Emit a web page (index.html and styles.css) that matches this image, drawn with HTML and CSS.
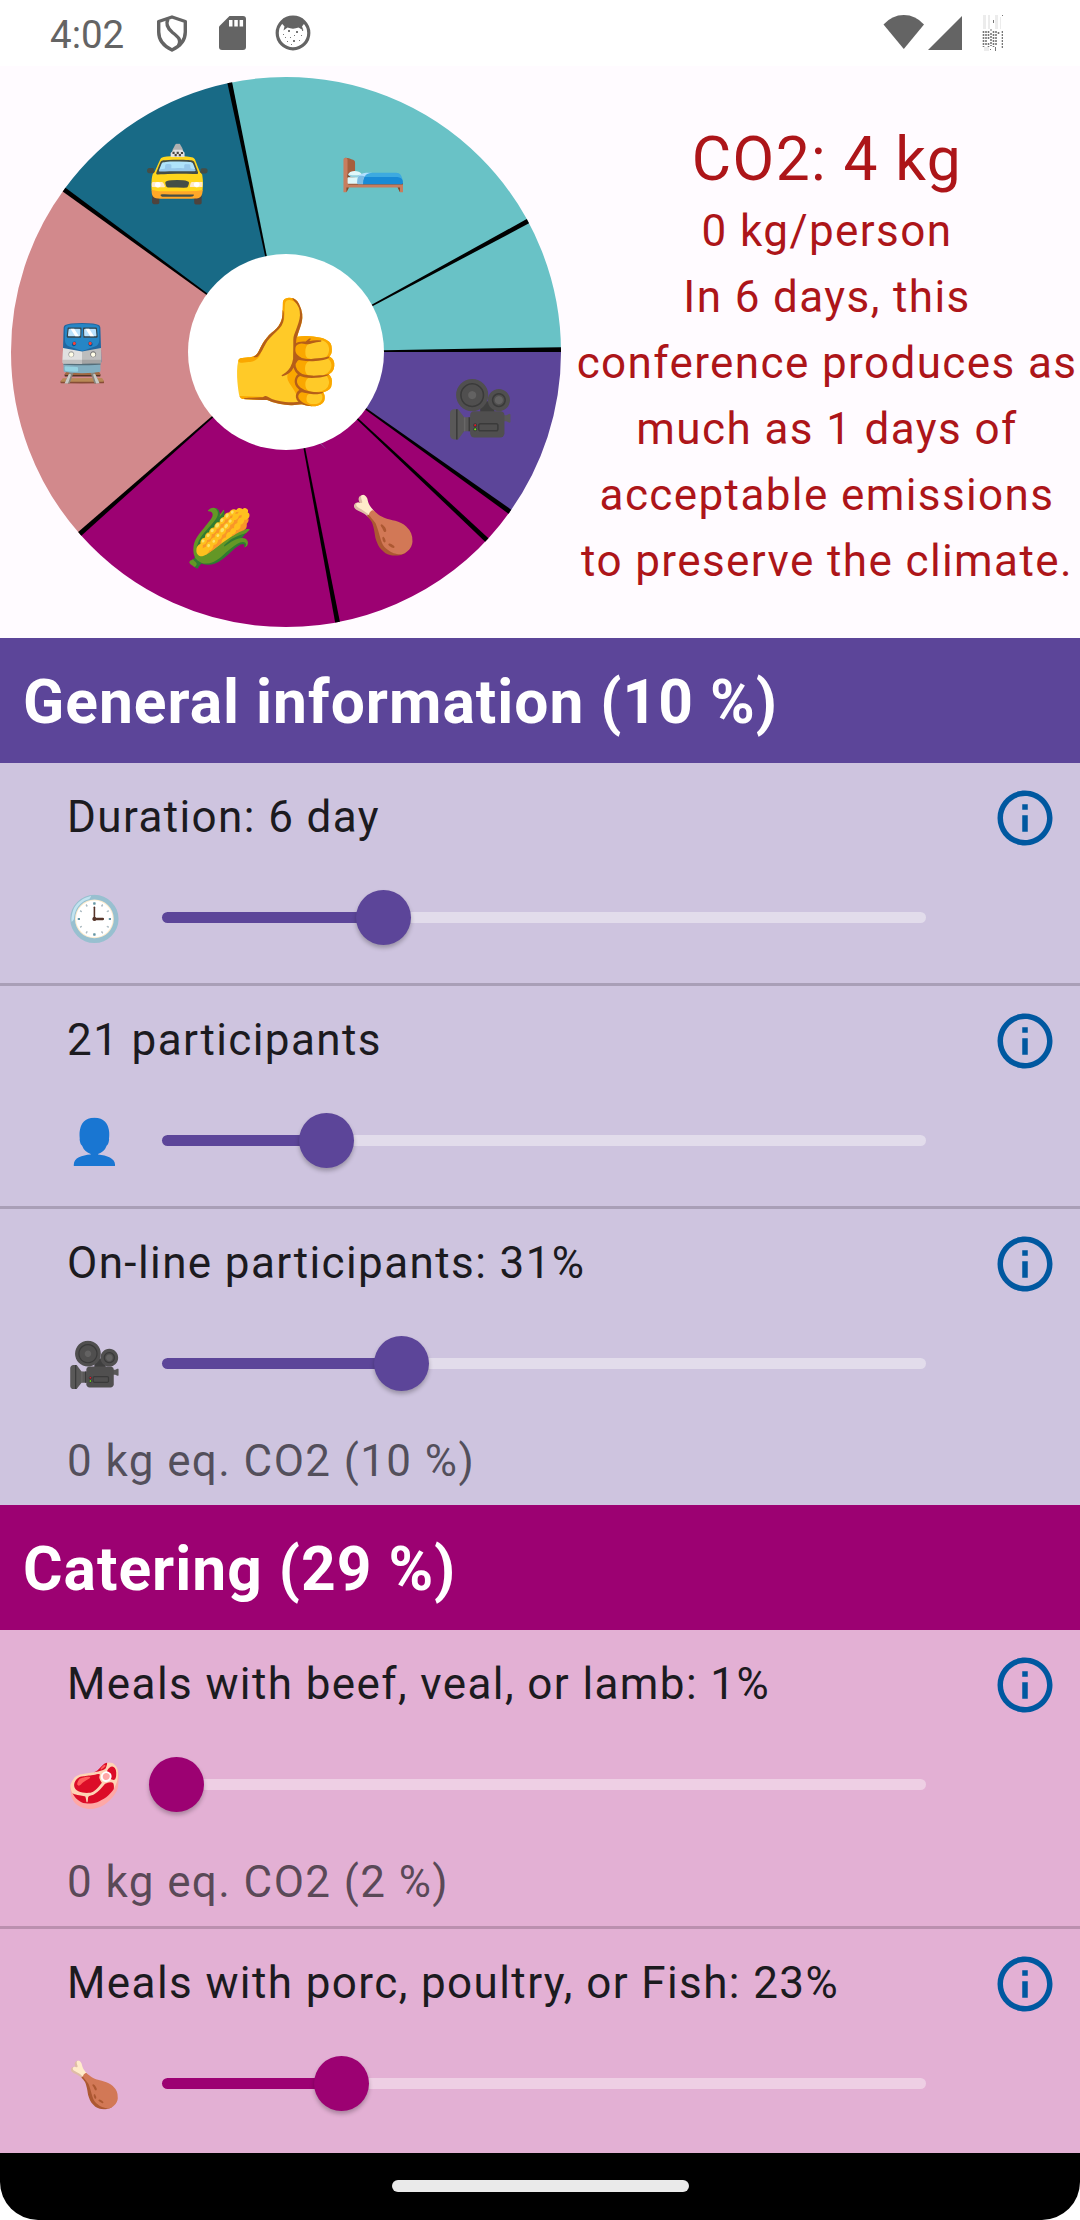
FILE: index.html
```html
<!DOCTYPE html>
<html lang="en">
<head>
<meta charset="utf-8">
<title>Conference CO2 calculator</title>
<link rel="stylesheet" href="styles.css">
</head>
<body>
<svg class="defs" aria-hidden="true">
  <symbol id="info" viewBox="0 0 24 24">
    <path d="M11 7h2v2h-2zM11 11h2v6h-2zM12 2C6.480 2 2 6.480 2 12s4.480 10 10 10 10-4.480 10-10S17.520 2 12 2zm0 18c-4.410 0-8-3.590-8-8s3.590-8 8-8 8 3.590 8 8-3.590 8-8 8z"/>
  </symbol>
</svg>
<div class="screen">
  <header class="status">
    <span class="time">4:02</span>
    <svg class="shield" viewBox="0 0 32 37">
      <path d="M16 2 L29.300 6.500 V17 C29.300 26 23.500 31.500 16 35 C8.500 31.500 2.700 26 2.700 17 V6.500 Z" fill="none" stroke="#646464" stroke-width="3.400" stroke-linejoin="round"/>
      <path d="M12 4 C9.500 9 11 13 16.500 17.500 C23 22.500 25.500 25 22.500 31" fill="none" stroke="#646464" stroke-width="3.400"/>
    </svg>
    <svg class="sd" viewBox="0 0 27 34">
      <path d="M10.500 0H24q3 0 3 3V31q0 3-3 3H3q-3 0-3-3V10.500z" fill="#646464"/>
      <path d="M10 4h3.500v6.500H10zM15.300 4h3.500v6.500h-3.500zM20.600 4h3.500v6.500h-3.500z" fill="#fff"/>
    </svg>
    <svg class="face" viewBox="0 0 36 36">
      <circle cx="18" cy="18" r="15.800" fill="#fff" stroke="#646464" stroke-width="3.200"/>
      <path d="M6 7.500C12 1 24 1 30 7.500L27 11.500 28.500 15.500 23.500 12.500C20 14 16 14 12.500 12.500L8.500 15.500 9.500 11.500z" fill="#646464"/>
      <path d="M13 15h2v2h-2zM21 16h2v2h-2zM8 19h1v1h-1zM15 22h1v1h-1zM19 20h1v1h-1zM26 20h1v1h-1zM18 25h2v2h-2zM12 26h1v1h-1zM24 25h1v1h-1zM16 29h1v1h-1zM10 22h1v1h-1zM27 15h1v1h-1z" fill="#777"/>
    </svg>
    <span class="spacer"></span>
    <svg class="wifi" viewBox="0 0 42 34"><path d="M0.500 9.500Q9 0 20.800 0T41 9.500L20.800 34z" fill="#646464"/></svg>
    <svg class="signal" viewBox="0 0 34 34"><path d="M34 0V34H0z" fill="#646464"/></svg>
    <svg class="battery" viewBox="0 0 21 36">
      <path d="M1 0h3v14h-3zM6 0h2v14h-2zM13 0h3v14h-3zM18 2h1v12h-1zM2 32h5v4h-5z" fill="#ececec"/>
      <path d="M11.500 5v3M20.500 0v1M9 14v2M13.500 32v4M8.500 34v1" stroke="#777" fill="none"/>
      <path d="M1.500 16v16M4 16v14M6.500 16v8M9 18v13M11.500 16v16M14 16v14M16.500 17v3M20.500 16v17M6.500 28v4" stroke="#777" stroke-width="1.600" stroke-dasharray="2 1" fill="none"/>
    </svg>
  </header>

  <section class="summary">
    <svg class="wheel" viewBox="11 77 550 550">
      <g class="slices" transform="translate(286 352)">
        <circle r="137.500" pathLength="360" stroke="#5c4599" stroke-dasharray="36 324"/>
        <circle r="137.500" pathLength="360" stroke="#9c0172" stroke-dasharray="103 257" stroke-dashoffset="-35.500"/>
        <circle r="137.500" pathLength="360" stroke="#d2898c" stroke-dasharray="77.600 282.400" stroke-dashoffset="-138.500"/>
        <circle r="137.500" pathLength="360" stroke="#186a86" stroke-dasharray="42 318" stroke-dashoffset="-216.200"/>
        <circle r="137.500" pathLength="360" stroke="#69c2c6" stroke-dasharray="101.900 258.100" stroke-dashoffset="-258.100"/>
      </g>
      <g transform="translate(286 352)">
        <path id="gap" d="M0 0L274.960-4.800 275 0z"/>
        <use href="#gap" transform="rotate(36)"/>
        <use href="#gap" transform="rotate(43.600)"/>
        <use href="#gap" transform="rotate(79.700)"/>
        <use href="#gap" transform="rotate(139.100)"/>
        <use href="#gap" transform="rotate(216.700)"/>
        <use href="#gap" transform="rotate(258.700)"/>
        <use href="#gap" transform="rotate(332.100)"/>
        <circle r="98" fill="#fff"/>
      </g>
      <g class="marks">
        <text x="177.500" y="193">🚖</text>
        <text x="374" y="181">🛏️</text>
        <text x="83" y="372">🚆</text>
        <text x="480.500" y="428">🎥</text>
        <text x="383.500" y="544">🍗</text>
        <text x="219.500" y="557">🌽</text>
        <text class="verdict" x="284" y="387">👍</text>
      </g>
    </svg>
    <div class="totals">
      <div class="total">CO2: 4 kg</div>
      <div>0 kg/person</div>
      <div>In 6 days, this conference produces as much as 1 days of acceptable emissions to preserve the climate.</div>
    </div>
  </section>

  <section class="group general">
    <h2>General information (10 %)</h2>
    <div class="item">
      <div class="head"><span>Duration: 6 day</span><svg class="info"><use href="#info"/></svg></div>
      <div class="control"><span class="emoji">🕒</span><div class="track"><div class="fill" style="width:28.97%"></div></div></div>
    </div>
    <div class="item">
      <div class="head"><span>21 participants</span><svg class="info"><use href="#info"/></svg></div>
      <div class="control"><span class="emoji">👤</span><div class="track"><div class="fill" style="width:21.5%"></div></div></div>
    </div>
    <div class="item">
      <div class="head"><span>On-line participants: 31%</span><svg class="info"><use href="#info"/></svg></div>
      <div class="control"><span class="emoji">🎥</span><div class="track"><div class="fill" style="width:31.3%"></div></div></div>
      <div class="note">0 kg eq. CO2 (10 %)</div>
    </div>
  </section>

  <section class="group catering">
    <h2>Catering (29 %)</h2>
    <div class="item">
      <div class="head"><span>Meals with beef, veal, or lamb: 1%</span><svg class="info"><use href="#info"/></svg></div>
      <div class="control"><span class="emoji">🥩</span><div class="track"><div class="fill" style="width:1.9%"></div></div></div>
      <div class="note">0 kg eq. CO2 (2 %)</div>
    </div>
    <div class="item">
      <div class="head"><span>Meals with porc, poultry, or Fish: 23%</span><svg class="info"><use href="#info"/></svg></div>
      <div class="control"><span class="emoji">🍗</span><div class="track"><div class="fill" style="width:23.5%"></div></div></div>
    </div>
  </section>

  <footer class="navbar"><div class="handle"></div></footer>
</div>
</body>
</html>
```
FILE: styles.css
```css
* { box-sizing: border-box; }

body {
  margin: 0;
  background: #fff;
  font-family: Roboto, "Noto Color Emoji", sans-serif;
  font-size: 44px;
  line-height: 66px;
  letter-spacing: 1.4px;
  color: #1c1b1f;
}

.defs { display: none; }

.screen {
  display: flex;
  flex-direction: column;
  width: 1080px;
  height: 2220px;
  overflow: hidden;
}

/* Status bar */
.status {
  display: flex;
  flex: none;
  align-items: flex-start;
  height: 66px;
  padding: 15px 77px 0 50px;
}
.time {
  width: 106px;
  font-size: 38.5px;
  line-height: 39px;
  letter-spacing: 0;
  color: #646464;
}
.shield { width: 32px; height: 37px; }
.sd { width: 27px; height: 34px; margin: 1px 0 0 31px; }
.face { width: 36px; height: 36px; margin-left: 29px; }
.spacer { flex: 1; }
.wifi { width: 42px; height: 34px; }
.signal { width: 34px; height: 34px; margin: 1px 0 0 3px; }
.battery { width: 21px; height: 36px; margin-left: 20px; }

/* Summary */
.summary {
  display: flex;
  flex: none;
  height: 572px;
  padding: 11px 0 11px 11px;
  background: #fffbff;
}
.wheel { flex: none; width: 550px; height: 550px; }
.slices { fill: none; stroke-width: 275px; }
.marks { font-size: 55px; letter-spacing: 0; text-anchor: middle; }
.verdict { font-size: 104.5px; }
.totals {
  width: 506px;
  margin-left: 13px;
  padding-top: 44px;
  text-align: center;
  color: #ad1519;
}
.total { font-size: 60.5px; line-height: 77px; }

/* Groups */
.group { flex: none; }
h2 {
  height: 125px;
  margin: 0;
  padding: 4px 22px 0 23px;
  font-size: 60.5px;
  font-weight: 700;
  line-height: 122px;
  letter-spacing: 1px;
  color: #fff;
}
.general { --accent: #5c4599; --soft: #cec4df; --rail: #e2dceb; --rule: #a99fb7; }
.catering { --accent: #9c0172; --soft: #e3b0d4; --rail: #eecfe4; --rule: #bb90af; }
.group h2 { background: var(--accent); }
.item { padding: 21px 22px 1px 67px; background: var(--soft); }
.item + .item { border-top: 3px solid var(--rule); }
.catering .item:last-child { padding-bottom: 5px; }
.head { display: flex; justify-content: space-between; height: 66px; }
.info { width: 66px; height: 66px; margin-top: 1px; fill: #0058a0; }
.control { display: flex; align-items: center; height: 132px; }
.emoji { width: 95px; padding: 6px 0 0 0; letter-spacing: 0; }
.track {
  width: 764px;
  height: 11px;
  margin-top: 2px;
  border-radius: 6px;
  background: var(--rail);
}
.fill {
  position: relative;
  height: 11px;
  border-radius: 6px;
  background: var(--accent);
}
.fill::after {
  content: "";
  position: absolute;
  top: -22px;
  right: -27.5px;
  width: 55px;
  height: 55px;
  border-radius: 50%;
  background: var(--accent);
  box-shadow: 0 3px 4px rgba(0, 0, 0, .25);
}
.note { padding-bottom: 10px; color: rgba(28, 27, 31, .7); }

/* System navigation */
.navbar {
  display: flex;
  flex: 1;
  align-items: flex-start;
  justify-content: center;
  padding-top: 27px;
  background: #000;
  border-radius: 0 0 38px 38px;
}
.handle { width: 297px; height: 12px; border-radius: 6px; background: #eaeaea; }
```
